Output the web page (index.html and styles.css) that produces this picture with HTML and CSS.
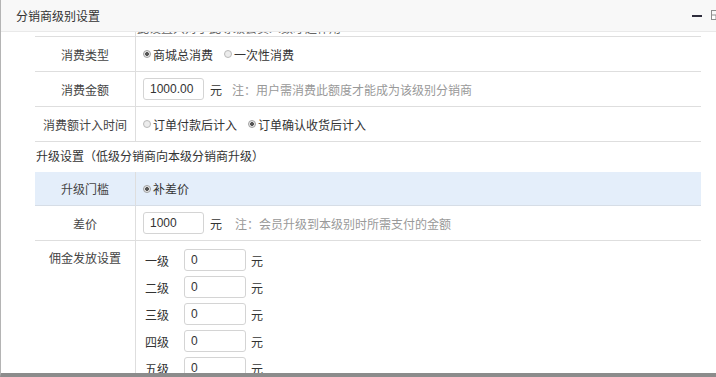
FILE: index.html
```html
<!DOCTYPE html>
<html lang="zh-CN">
<head>
  <meta charset="UTF-8">
  <title>分销商级别设置</title>
  <link rel="stylesheet" href="styles.css">
</head>
<body>

  <div class="dialog">
    <div class="dialog-head">
      <span class="dialog-title">分销商级别设置</span>
      <span class="dialog-tools">
        <span class="tool-min"></span>
        <svg class="tool-max" width="10" height="10" viewBox="0 0 10 10">
          <rect x="0.5" y="0.5" width="9" height="9" fill="none" stroke="#8d8d8d"/>
          <rect x="0.5" y="5" width="4.5" height="4.5" fill="#fff" stroke="#8d8d8d"/>
        </svg>
      </span>
    </div>

    <div class="dialog-body">
      <div class="form">

        <div class="row row-note">
          <div class="row-label"></div>
          <div class="row-value note">此设置只对于此等级会员人数才起作用</div>
        </div>

        <div class="row">
          <div class="row-label">消费类型</div>
          <div class="row-value">
            <label class="radio checked">商城总消费</label>
            <label class="radio">一次性消费</label>
          </div>
        </div>

        <div class="row">
          <div class="row-label">消费金额</div>
          <div class="row-value">
            <input class="txt" type="text" value="1000.00">
            <span class="unit">元</span>
            <span class="hint">注：用户需消费此额度才能成为该级别分销商</span>
          </div>
        </div>

        <div class="row">
          <div class="row-label">消费额计入时间</div>
          <div class="row-value">
            <label class="radio">订单付款后计入</label>
            <label class="radio checked">订单确认收货后计入</label>
          </div>
        </div>

        <div class="section-title">升级设置（低级分销商向本级分销商升级）</div>

        <div class="row row-active">
          <div class="row-label">升级门槛</div>
          <div class="row-value">
            <label class="radio checked">补差价</label>
          </div>
        </div>

        <div class="row">
          <div class="row-label">差价</div>
          <div class="row-value">
            <input class="txt" type="text" value="1000">
            <span class="unit">元</span>
            <span class="hint hint-wide">注：会员升级到本级别时所需支付的金额</span>
          </div>
        </div>

        <div class="row row-top">
          <div class="row-label">佣金发放设置</div>
          <div class="row-value levels">
            <div class="level"><span class="level-name">一级</span><input class="txt" type="text" value="0"><span class="unit">元</span></div>
            <div class="level"><span class="level-name">二级</span><input class="txt" type="text" value="0"><span class="unit">元</span></div>
            <div class="level"><span class="level-name">三级</span><input class="txt" type="text" value="0"><span class="unit">元</span></div>
            <div class="level"><span class="level-name">四级</span><input class="txt" type="text" value="0"><span class="unit">元</span></div>
            <div class="level"><span class="level-name">五级</span><input class="txt" type="text" value="0"><span class="unit">元</span></div>
          </div>
        </div>

      </div>
    </div>
  </div>

</body>
</html>
```

FILE: styles.css
```css
html, body {
  margin: 0;
  padding: 0;
}

body {
  width: 716px;
  height: 377px;
  overflow: hidden;
  background: #fff;
  font-family: "Liberation Sans", "Noto Sans CJK SC", sans-serif;
  font-size: 12px;
  color: #333;
}

.dialog {
  height: 377px;
  box-sizing: border-box;
  display: flex;
  flex-direction: column;
  border-left: 1px solid #b4b4b4;
  border-bottom: 4px solid #8c8c8c;
}

.dialog-head {
  height: 31px;
  flex: none;
  display: flex;
  align-items: center;
  padding-left: 15px;
  background: #f8f8f8;
  border-bottom: 1px solid #e9e9e9;
  overflow: hidden;
}

.dialog-title {
  flex: 1;
  font-size: 12px;
  color: #333;
}

.dialog-tools {
  display: flex;
  align-items: center;
  gap: 9px;
  margin-right: -5px;
}

.tool-min {
  width: 10px;
  height: 2px;
  background: #2e2d3c;
  margin-top: 1px;
}

.tool-max {
  display: block;
  margin-top: -1px;
}

.dialog-body {
  flex: 1;
  overflow: hidden;
  padding: 0 15px 0 34px;
}

/* content is scrolled down a little */
.form {
  margin-top: -14px;
}

.row {
  display: flex;
  border-bottom: 1px solid #dedede;
}

.row-label {
  width: 100px;
  flex: none;
  border-right: 1px solid #dedede;
  display: flex;
  align-items: center;
  justify-content: center;
  color: #444;
}

.row-value {
  flex: 1;
  min-height: 34px;
  display: flex;
  align-items: center;
  padding-left: 7px;
}

.row-note .row-value {
  min-height: 18px;
  align-items: flex-end;
  padding-left: 1px;
  padding-bottom: 0;
  line-height: 13px;
  color: #666;
}

.row-active {
  background: #e4eefa;
  border-bottom-color: #d6dde6;
}

.row-active .row-value {
  min-height: 33px;
}

.row-top .row-label {
  align-items: flex-start;
  padding-top: 9px;
  line-height: 18px;
}

.section-title {
  height: 30px;
  line-height: 30px;
  padding-left: 1px;
  color: #333;
}

.radio {
  display: inline-flex;
  align-items: center;
  margin-right: 11px;
  color: #333;
}

.radio::before {
  content: "";
  width: 8px;
  height: 8px;
  margin-right: 2px;
  border: 1px solid #b9b9b9;
  border-radius: 50%;
  background: #ececec;
  box-sizing: border-box;
}

.radio.checked::before {
  background: radial-gradient(circle, #555 0, #555 1.6px, #e6e6e6 2.2px);
  border-color: #a0a0a0;
}

.txt {
  width: 61px;
  height: 22px;
  box-sizing: border-box;
  padding: 0 6px;
  border: 1px solid #d4d4d4;
  border-radius: 3px;
  font-family: "Liberation Sans", sans-serif;
  font-size: 12px;
  color: #333;
  outline: none;
}

.unit {
  margin-left: 6px;
  color: #333;
}

.hint {
  margin-left: 10px;
  color: #999;
}

.hint-wide {
  margin-left: 13px;
}

.levels {
  flex-direction: column;
  align-items: flex-start;
  gap: 5px;
  padding-top: 8px;
}

.level {
  display: flex;
  align-items: center;
}

.level-name {
  width: 41px;
  padding-left: 2px;
  box-sizing: border-box;
  color: #333;
}

.level .txt {
  width: 62px;
}

.level .unit {
  margin-left: 5px;
}
```
